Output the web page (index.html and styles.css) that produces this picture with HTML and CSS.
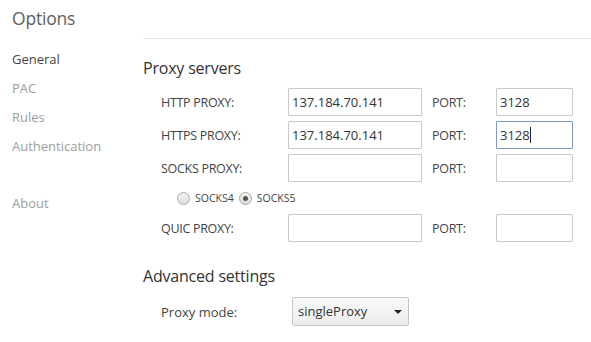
FILE: index.html
```html
<!DOCTYPE html>
<html lang="en">
<head>
    <meta charset="UTF-8">
    <title>Options</title>
    <link rel="stylesheet" href="styles.css">
</head>
<body>
    <div class="page">
        <aside class="sidebar">
            <h1 class="page-title">Options</h1>
            <nav class="nav">
                <a class="nav-item active">General</a>
                <a class="nav-item">PAC</a>
                <a class="nav-item">Rules</a>
                <a class="nav-item">Authentication</a>
                <a class="nav-item nav-about">About</a>
            </nav>
        </aside>

        <main class="content">
            <div class="content-header"></div>

            <section class="section">
                <h2 class="section-title">Proxy servers</h2>
                <div class="proxy-grid">
                    <label class="field-label">HTTP PROXY:</label>
                    <input class="text-input" type="text" value="137.184.70.141">
                    <label class="port-label">PORT:</label>
                    <input class="text-input port-input" type="text" value="3128">

                    <label class="field-label">HTTPS PROXY:</label>
                    <input class="text-input" type="text" value="137.184.70.141">
                    <label class="port-label">PORT:</label>
                    <div class="text-input port-input focused">3128<span class="caret"></span></div>

                    <label class="field-label">SOCKS PROXY:</label>
                    <input class="text-input" type="text" value="">
                    <label class="port-label">PORT:</label>
                    <input class="text-input port-input" type="text" value="">

                    <div class="socks-options">
                        <label class="radio"><span class="radio-dot"></span>SOCKS4</label>
                        <label class="radio"><span class="radio-dot checked"></span>SOCKS5</label>
                    </div>

                    <label class="field-label">QUIC PROXY:</label>
                    <input class="text-input" type="text" value="">
                    <label class="port-label">PORT:</label>
                    <input class="text-input port-input" type="text" value="">
                </div>
            </section>

            <section class="section advanced">
                <h2 class="section-title">Advanced settings</h2>
                <div class="mode-row">
                    <label class="field-label">Proxy mode:</label>
                    <div class="select">singleProxy</div>
                </div>
            </section>
        </main>
    </div>
</body>
</html>
```

FILE: styles.css
```css
:root {
    --text-dark: #444;
    --text-muted: #9d9d9d;
    --border: #c9c9c9;
    --border-focus: #7d98c4;
    --line: #e6e6e6;
}

* {
    margin: 0;
    padding: 0;
    box-sizing: border-box;
    font-family: 'Open Sans', 'Noto Sans', sans-serif;
}

body {
    background-color: white;
    color: var(--text-dark);
    font-size: 13px;
}

.page {
    display: flex;
    width: 591px;
    height: 342px;
    overflow: hidden;
}

/* Left navigation */
.sidebar {
    width: 143px;
    flex-shrink: 0;
    padding-left: 12px;
}

.page-title {
    font-size: 17.5px;
    font-weight: 400;
    color: #606060;
    line-height: 24px;
    margin-top: 6px;
    letter-spacing: -0.2px;
}

.nav {
    display: flex;
    flex-direction: column;
    margin-top: 15px;
}

.nav-item {
    line-height: 29px;
    color: var(--text-muted);
}

.nav-item.active {
    color: #444;
}

.nav-about {
    margin-top: 28px;
}

/* Main content */
.content {
    flex: 1;
}

.content-header {
    height: 39px;
    border-bottom: 1px solid var(--line);
}

.section-title {
    font-size: 16px;
    font-weight: 400;
    color: #333;
    line-height: 24px;
    letter-spacing: -0.2px;
}

.section {
    padding-top: 17px;
}

.section.advanced {
    padding-top: 22px;
}

.proxy-grid {
    display: grid;
    grid-template-columns: 127px 134px 74px 77px;
    grid-template-rows: 28px 28px 28px 22px 28px;
    row-gap: 5px;
    margin-top: 8px;
    padding-left: 18px;
    align-items: center;
}

.field-label,
.port-label {
    font-size: 12.5px;
    letter-spacing: -0.3px;
    color: var(--text-dark);
}

.port-label {
    padding-left: 10px;
}

.text-input {
    height: 28px;
    width: 100%;
    border: 1px solid var(--border);
    border-radius: 1px;
    padding: 0 3px;
    font-size: 13px;
    color: #333;
    outline: none;
    background: white;
}

.focused {
    display: flex;
    align-items: center;
    border-color: var(--border-focus);
}

.caret {
    width: 1px;
    height: 16px;
    background-color: #222;
}

.socks-options {
    grid-column: 1 / -1;
    display: flex;
    align-items: center;
    gap: 5px;
    padding-left: 16px;
}

.radio {
    display: flex;
    align-items: center;
    gap: 5px;
    font-size: 10.5px;
    color: #444;
}

.radio-dot {
    width: 13px;
    height: 13px;
    border-radius: 50%;
    border: 1px solid #a9a9a9;
    background: linear-gradient(#f4f4f4, #dcdcdc);
    display: flex;
    align-items: center;
    justify-content: center;
}

.radio-dot.checked::after {
    content: "";
    width: 5px;
    height: 5px;
    border-radius: 50%;
    background-color: #555;
}

.mode-row {
    display: flex;
    align-items: center;
    margin-top: 9px;
    padding-left: 18px;
}

.mode-row .field-label {
    width: 131px;
    font-size: 13px;
    letter-spacing: 0;
}

.select {
    position: relative;
    width: 117px;
    height: 29px;
    line-height: 27px;
    padding-left: 5px;
    border: 1px solid #c6c6c6;
    border-radius: 2px;
    background: linear-gradient(#f9f9f9, #ececec);
    color: #333;
    font-size: 13px;
}

.select::after {
    content: "";
    position: absolute;
    right: 6px;
    top: 12px;
    border-left: 4px solid transparent;
    border-right: 4px solid transparent;
    border-top: 4px solid #222;
}
```
